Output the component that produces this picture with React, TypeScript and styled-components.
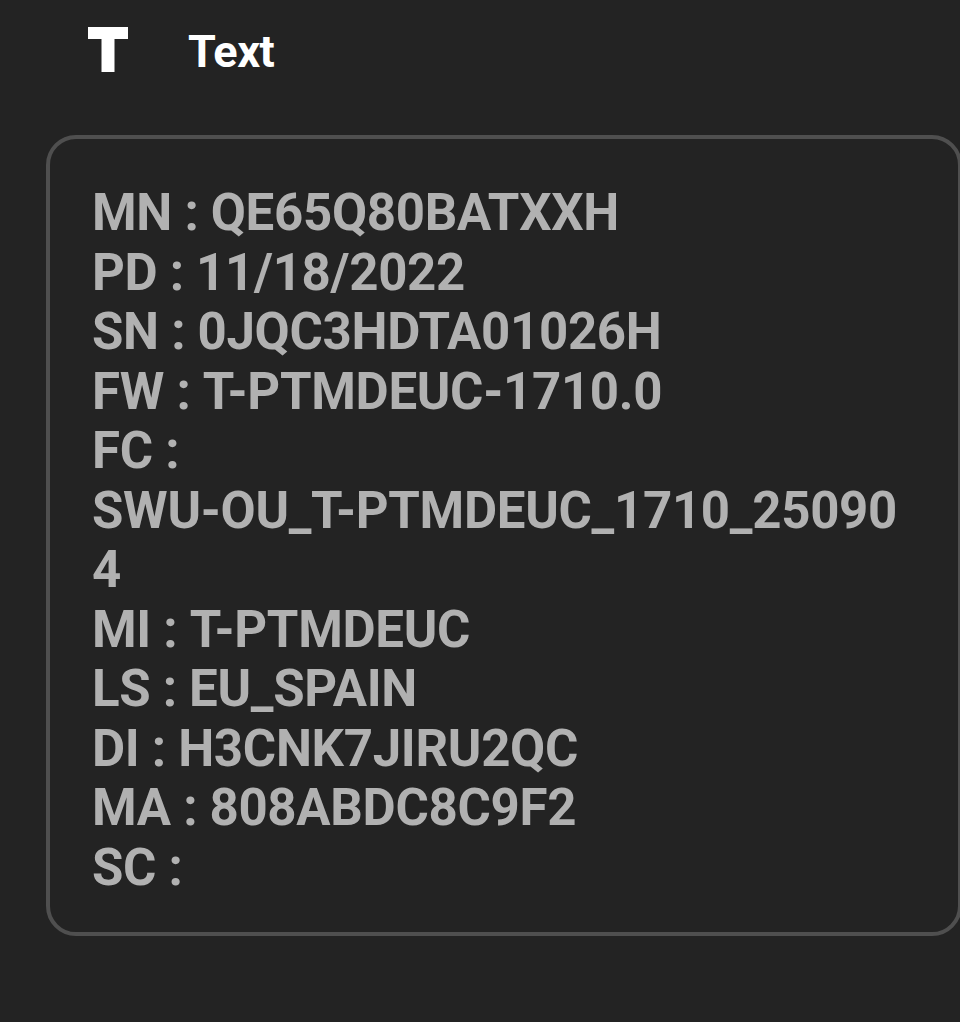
import styled, { createGlobalStyle } from "styled-components";

const GlobalStyle = createGlobalStyle`
    html, body {
        margin: 0;
        padding: 0;
        background-color: #232323;
    }
    body {
        font-family: Roboto, "Noto Sans", sans-serif;
    }
`;

const Page = styled.div`
    min-height: 1022px;
    padding-top: 26px;
    box-sizing: border-box;
    overflow: hidden;
`;

const Header = styled.div`
    display: flex;
    align-items: center;
    height: 46px;
    padding-left: 88px;
    gap: 60px;
`;

const HeaderTitle = styled.h1`
    margin: 0;
    font-size: 45px;
    font-weight: 700;
    color: #ffffff;
    letter-spacing: -0.5px;
    line-height: 1;
    padding-top: 4px;
`;

const InfoBox = styled.div`
    margin-top: 63px;
    margin-left: 46px;
    width: 916px;
    box-sizing: border-box;
    border: 4px solid #4f4f4f;
    border-radius: 30px;
    padding: 44px 42px 35px 42px;
`;

const Row = styled.div`
    display: flex;
    flex-wrap: wrap;
    column-gap: 0.24em;
    font-size: 51px;
    font-weight: 700;
    letter-spacing: -0.3px;
    line-height: 59.5px;
    color: #b1b1b1;
`;

const Label = styled.span`
    white-space: nowrap;
`;

const Value = styled.span`
    word-break: break-all;
    min-width: 0;
`;

function TextIcon() {
    return (
        <svg width="40" height="45" viewBox="0 0 40 45" aria-hidden="true">
            <rect x="0" y="0" width="40" height="12" fill="#ffffff" />
            <rect x="13.5" y="0" width="13" height="45" fill="#ffffff" />
        </svg>
    );
}

const rows: { label: string; value: string }[] = [
    { label: "MN :", value: "QE65Q80BATXXH" },
    { label: "PD :", value: "11/18/2022" },
    { label: "SN :", value: "0JQC3HDTA01026H" },
    { label: "FW :", value: "T-PTMDEUC-1710.0" },
    { label: "FC :", value: "SWU-OU_T-PTMDEUC_1710_250904" },
    { label: "MI :", value: "T-PTMDEUC" },
    { label: "LS :", value: "EU_SPAIN" },
    { label: "DI :", value: "H3CNK7JIRU2QC" },
    { label: "MA :", value: "808ABDC8C9F2" },
    { label: "SC :", value: "" },
];

function App() {
    return (
        <>
            <GlobalStyle />
            <Page>
                <Header>
                    <TextIcon />
                    <HeaderTitle>Text</HeaderTitle>
                </Header>
                <InfoBox>
                    {rows.map((row) => (
                        <Row key={row.label}>
                            <Label>{row.label}</Label>
                            {row.value ? <Value>{row.value}</Value> : null}
                        </Row>
                    ))}
                </InfoBox>
            </Page>
        </>
    );
}

export default App;
